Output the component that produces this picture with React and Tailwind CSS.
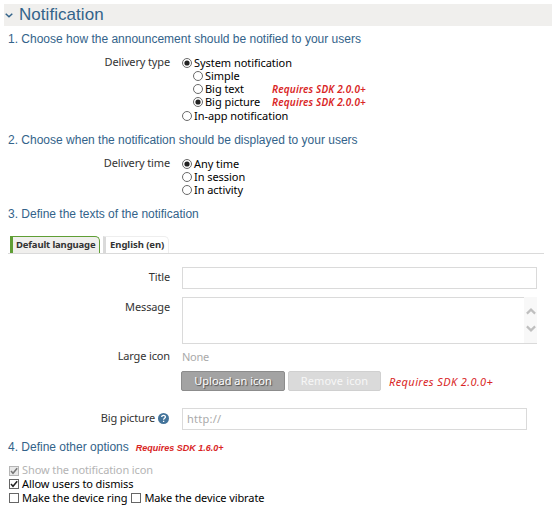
import React from "react";

const UI = "font-['Noto_Sans','Open_Sans',sans-serif]";

function Radio({ checked, children, className = "" }) {
  return (
    <div className={`flex items-center whitespace-nowrap tracking-[-0.05px] text-black ${className}`}>
      <svg width="10" height="10" viewBox="0 0 10 10" className="mb-px mr-[2px] shrink-0">
        <circle cx="5" cy="5" r="4.5" fill="#fff" stroke="#6a6a6a" strokeWidth="1" />
        {checked && <circle cx="5" cy="5" r="2.6" fill="#222" />}
      </svg>
      <span className="-mt-px mb-px">{children}</span>
    </div>
  );
}

function Check({ checked, disabled, children, className = "" }) {
  return (
    <div className={`flex items-center whitespace-nowrap tracking-[-0.1px] ${disabled ? "text-[#b4b4b4]" : "text-black"} ${className}`}>
      <svg width="10" height="10" viewBox="0 0 10 10" className="mr-[3px] shrink-0">
        <rect x=".5" y=".5" width="9" height="9" fill={disabled ? "#e8e8e8" : "#fff"} stroke={disabled ? "#b5b5b5" : "#666"} />
        {checked && <path d="M2 5 4 7.3 8.2 2.2" fill="none" stroke={disabled ? "#777" : "#222"} strokeWidth="1.5" />}
      </svg>
      <span className="-mt-px mb-px">{children}</span>
    </div>
  );
}

function Heading({ children, className = "" }) {
  return (
    <h2 className={`flex h-4 items-center whitespace-nowrap pl-2 font-['Liberation_Sans',Arial,sans-serif] text-[12px] leading-4 text-[#33638a] ${className}`}>
      {children}
    </h2>
  );
}

function Label({ children, className = "" }) {
  return (
    <div className={`mr-3 flex w-[170px] shrink-0 justify-end whitespace-nowrap tracking-[-0.14px] text-[#333] ${className}`}>
      {children}
    </div>
  );
}

function Requires({ children, className = "" }) {
  return <em className={`whitespace-nowrap text-[#d92525] ${className}`}>{children}</em>;
}

export default function App() {
  return (
    <main className={`h-[516px] w-[556px] overflow-hidden bg-white pt-1 text-[11px] leading-[13px] ${UI}`}>
      <header className="ml-1 flex h-[22px] w-[548px] items-center bg-[#f0efed]">
        <svg width="8" height="5" viewBox="0 0 8 5" className="ml-[1px] mr-[6px]">
          <path d="M.7.8 4 3.8 7.3.8" fill="none" stroke="#33638a" strokeWidth="1.5" />
        </svg>
        <h1 className="font-['Liberation_Sans',Arial,sans-serif] text-[17px] leading-[22px] tracking-[0.05px] text-[#33638a]">Notification</h1>
      </header>

      <Heading className="mt-[5px]">1. Choose how the announcement should be notified to your users</Heading>
      <section className="mt-[8px] flex h-[68px]">
        <Label>Delivery type</Label>
        <div className="pt-[2px]">
          <Radio checked>System notification</Radio>
          <Radio className="ml-[11px]">Simple</Radio>
          <div className="flex">
            <Radio className="ml-[11px] w-[79px]">Big text</Radio>
            <Requires className="text-[10px] font-semibold tracking-[0.17px]">Requires SDK 2.0.0+</Requires>
          </div>
          <div className="flex">
            <Radio checked className="ml-[11px] w-[79px]">Big picture</Radio>
            <Requires className="text-[10px] font-semibold tracking-[0.17px]">Requires SDK 2.0.0+</Requires>
          </div>
          <Radio className="mt-px">In-app notification</Radio>
        </div>
      </section>

      <Heading className="mt-[9px]">2. Choose when the notification should be displayed to your users</Heading>
      <section className="mt-[8px] flex h-[41px]">
        <Label>Delivery time</Label>
        <div className="pt-[2px]">
          <Radio checked>Any time</Radio>
          <Radio>In session</Radio>
          <Radio>In activity</Radio>
        </div>
      </section>

      <Heading className="mt-[9px]">3. Define the texts of the notification</Heading>
      <nav className="ml-2 mt-[14px] flex h-[18px] w-[536px] border-b border-[#dadada] pl-0.5 text-[9.5px] font-bold text-[#333]">
        <div className="flex h-[17px] w-[90px] items-center whitespace-nowrap rounded-tr-[5px] border-l-[3px] border-r border-t border-[#5f9e35] bg-[#f0efed] pl-[3px] tracking-[-0.15px]">
          <span className="-mt-px">Default language</span>
        </div>
        <div className="ml-[3px] flex h-[17px] w-[66px] items-center whitespace-nowrap rounded-tr-[5px] border-l-[3px] border-r border-t border-[#eee] border-l-[#dadada] pl-1 tracking-[-0.05px]">
          <span className="-mt-px">English (en)</span>
        </div>
      </nav>

      <div className="mt-[13px] flex h-[22px]">
        <Label className="pt-[3px]">Title</Label>
        <div className="w-[355px] border border-[#dadada]" />
      </div>

      <div className="mt-2 flex h-[47px]">
        <Label className="pt-[3px]">Message</Label>
        <div className="flex w-[355px] border-b border-[#dadada]">
          <div className="flex-1 border-l border-t border-[#dadada]" />
          <div className="flex w-[13px] flex-col items-center bg-[#f8f8f8] pt-[11px]">
            <svg width="10" height="24" viewBox="0 0 10 24" fill="none" stroke="#bfbfbf" strokeWidth="2.2">
              <path d="M.9 5.6 5 1.6l4.1 4M.9 18.4 5 22.4l4.1-4" />
            </svg>
          </div>
        </div>
      </div>

      <div className="mt-[5px] flex h-[14px]">
        <Label>Large icon</Label>
        <div className="pt-px tracking-[-0.3px] text-[#aaa]">None</div>
      </div>
      <div className="ml-[181px] mt-2 flex h-5 items-center">
        <div className="flex h-5 w-[104px] items-center justify-center rounded-[2px] border border-[#8c8c8c] bg-[#a3a3a3] text-white [text-shadow:1px_1px_1px_#444]">
          <span className="-mt-px">Upload an icon</span>
        </div>
        <div className="ml-[3px] flex h-5 w-[93px] items-center justify-center rounded-[2px] border border-[#d0d0d0] bg-[#dadada] tracking-[0.15px] text-[#f7f7f7]">
          <span className="-mt-px">Remove icon</span>
        </div>
        <Requires className="ml-2 pt-px tracking-[0.4px]">Requires SDK 2.0.0+</Requires>
      </div>

      <div className="mt-[17px] flex h-[22px]">
        <Label className="pt-[3px]">
          Big picture
          <svg width="11" height="11" viewBox="0 0 11 11" className="ml-[3px] mr-px mt-[2px]">
            <circle cx="5.5" cy="5.5" r="5.5" fill="#44749b" />
            <path d="M3.7 4.1C3.7 1.8 7.4 1.9 7.4 4c0 1.3-1.8 1.3-1.8 2.7M5.6 7.7v1.4" fill="none" stroke="#fff" strokeWidth="1.3" />
          </svg>
        </Label>
        <div className="flex w-[345px] items-center border border-[#dadada] pb-[2px] pl-1 tracking-[0.25px] text-[#aaa]">http://</div>
      </div>

      <Heading className="mt-[9px]">
        4. Define other options
        <Requires className="ml-[7px] mt-px text-[9px] font-bold">Requires SDK 1.6.0+</Requires>
      </Heading>
      <section className="ml-[9px] mt-[9px]">
        <Check checked disabled className="h-[13px]">Show the notification icon</Check>
        <Check checked className="h-[14px]">Allow users to dismiss</Check>
        <div className="flex h-[14px]">
          <Check>Make the device ring</Check>
          <Check className="ml-1">Make the device vibrate</Check>
        </div>
      </section>
    </main>
  );
}
